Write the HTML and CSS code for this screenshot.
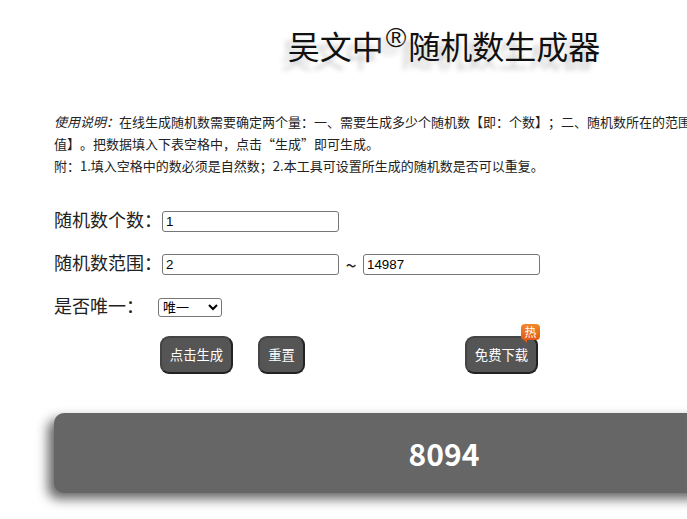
FILE: index.html
```html
<!DOCTYPE html>
<html lang="zh-CN">

<head>
    <meta charset="UTF-8">
    <meta name="viewport" content="width=device-width, initial-scale=1.0">
    <title>随机数生成器</title>
    <link rel="stylesheet" href="styles.css">
</head>

<body>

    <div class="wrap">
        <h1 class="title">吴文中<sup class="reg">®</sup>随机数生成器</h1>

        <div class="intro">
            <p><em>使用说明：</em>在线生成随机数需要确定两个量：一、需要生成多少个随机数【即：个数】；二、随机数所在的范围【即：最小值与最大值】。把数据填入下表空格中，点击“生成”即可生成。</p>
            <p>附：1.填入空格中的数必须是自然数；2.本工具可设置所生成的随机数是否可以重复。</p>
        </div>

        <div class="row">
            <label class="label">随机数个数：</label>
            <input class="num" type="text" value="1">
        </div>
        <div class="row">
            <label class="label">随机数范围：</label>
            <input class="num" type="text" value="2">
            <span class="tilde">~</span>
            <input class="num" type="text" value="14987">
        </div>
        <div class="row row-select">
            <label class="label label-short">是否唯一：</label>
            <select class="pick">
                <option>唯一</option>
                <option>可重复</option>
            </select>
        </div>

        <div class="btns">
            <button class="btn btn-gen">点击生成</button>
            <button class="btn btn-reset">重置</button>
            <button class="btn btn-down">免费下载<span class="hot">热</span></button>
        </div>

        <div class="result">8094</div>
    </div>

</body>

</html>
```

FILE: styles.css
```css
* {
    box-sizing: border-box;
}

html,
body {
    margin: 0;
    padding: 0;
    overflow: hidden;
    height: 100%;
}

body {
    font-family: "Noto Sans CJK SC", "Liberation Sans", sans-serif;
    background: #fff;
    color: #222;
}

.wrap {
    width: 780px;
    margin-left: 54px;
}

.title {
    margin: 0;
    padding-top: 22px;
    height: 111px;
    text-align: center;
    font-size: 32px;
    font-weight: 400;
    line-height: 46px;
    color: #111;
    text-shadow: -7px 8px 5px #ccc;
}

.reg {
    padding: 0 2px;
    font-family: "Liberation Sans", sans-serif;
    font-size: 28px;
    line-height: 0;
    vertical-align: 12px;
}

.intro {
    font-size: 13px;
    line-height: 22px;
    height: 100px;
    color: #222;
    text-spacing-trim: space-all;
}

.intro p {
    margin: 0;
}

.row {
    display: flex;
    align-items: center;
    height: 21px;
    margin-bottom: 22px;
}

.row-select {
    height: 20px;
    margin-bottom: 19px;
}

.label {
    width: 108px;
    padding-bottom: 4px;
    font-size: 18px;
    line-height: 21px;
    white-space: nowrap;
}

.label-short {
    width: 104px;
}

.num {
    width: 177px;
    height: 21px;
    padding: 1px 3px;
    border: 1px solid #767676;
    border-radius: 3px;
    font-family: "Liberation Sans", sans-serif;
    font-size: 13.33px;
    color: #000;
}

.tilde {
    width: 24px;
    text-align: center;
    font-size: 20px;
}

.pick {
    width: 64px;
    height: 19px;
    font-family: "Liberation Sans", "Noto Sans CJK SC", sans-serif;
    font-size: 13px;
    padding: 0;
    color: #000;
    background: #fff;
    border: 1px solid #767676;
    border-radius: 3px;
}

.btns {
    display: flex;
    padding-left: 106px;
    height: 77px;
}

.btn {
    position: relative;
    height: 38px;
    padding: 0 0 2px;
    font-family: "Noto Sans CJK SC", sans-serif;
    font-size: 13.33px;
    color: #fff;
    background: #555;
    border: 2px solid #444;
    border-bottom-color: #222;
    border-right-color: #222;
    border-radius: 9px;
}

.btn-gen {
    width: 73px;
    margin-right: 25px;
}

.btn-reset {
    width: 47px;
    margin-right: 160px;
}

.btn-down {
    width: 73px;
}

.hot {
    position: absolute;
    top: -14px;
    right: -4px;
    width: 19px;
    height: 16px;
    border-radius: 4px;
    background: linear-gradient(#f08a2c, #e25a14);
    color: #fff;
    font-size: 12px;
    line-height: 16px;
    text-align: center;
}

.hot::after {
    content: "";
    position: absolute;
    left: 2px;
    bottom: -3px;
    border-top: 4px solid #e25a14;
    border-left: 4px solid transparent;
}

.result {
    height: 80px;
    border-radius: 10px;
    background: #666;
    box-shadow: -6px 6px 12px #666;
    color: #fff;
    font-family: "Noto Sans CJK SC", sans-serif;
    font-size: 30px;
    font-weight: 700;
    line-height: 80px;
    text-align: center;
}
```
